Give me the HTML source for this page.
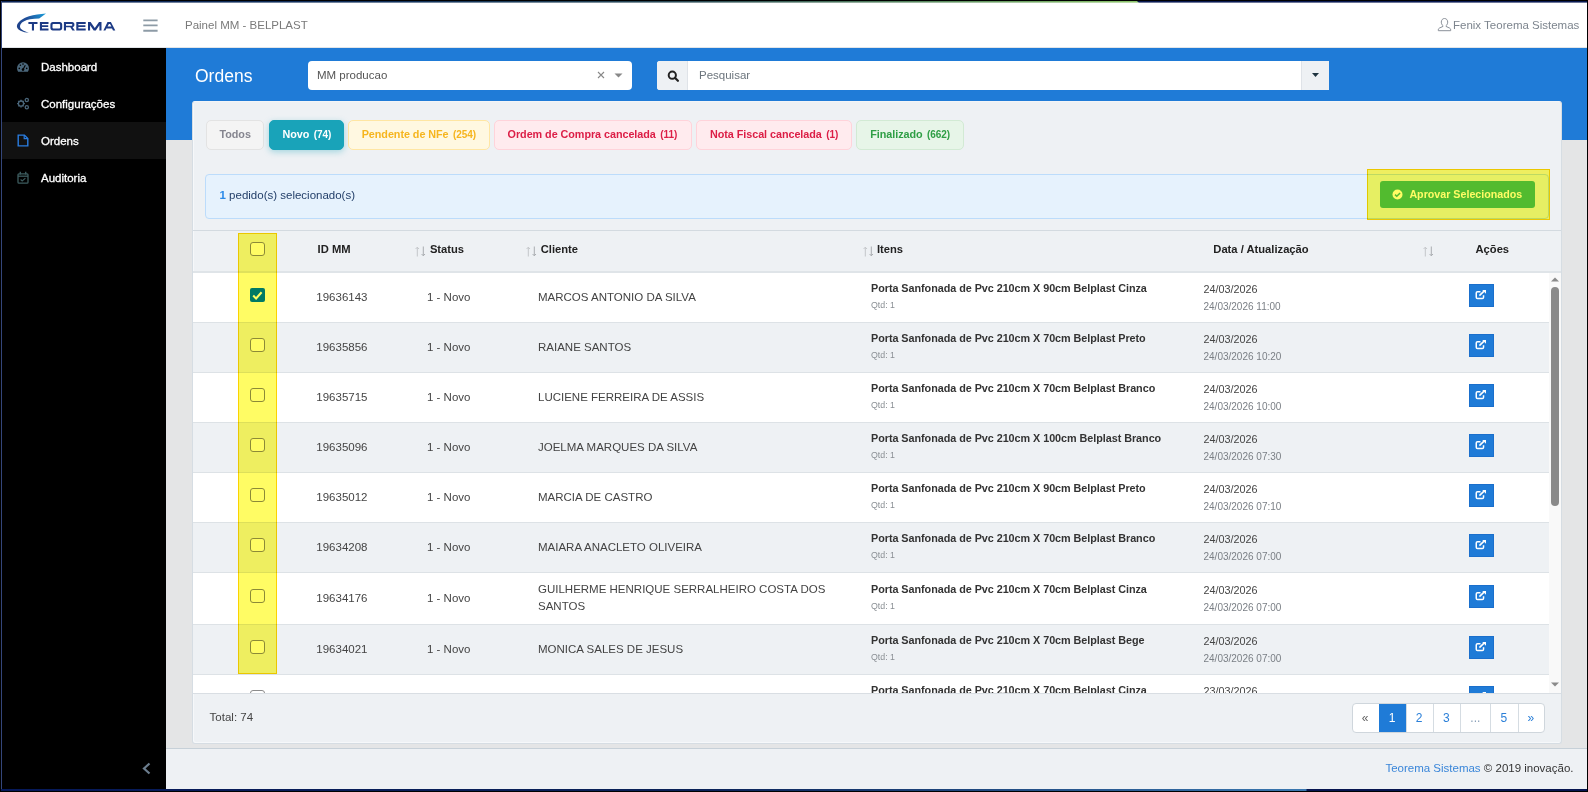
<!DOCTYPE html><html><head><meta charset="utf-8"><style>
*{box-sizing:border-box;margin:0;padding:0}
html,body{width:1588px;height:792px;overflow:hidden;background:#000}
body{position:relative;font-family:"Liberation Sans",sans-serif}
.a{position:absolute}
.t{position:absolute;white-space:nowrap}
</style></head><body><div class="a" style="left:1px;top:1px;width:1586px;height:1px;background:linear-gradient(to right,#0c2456 0,#10305a 400px,#2c4c55 700px,#5e9060 950px,#8cc46a 1136px,#0a1a52 1137px,#0a1a52 100%)"></div>
<div class="a" style="left:1px;top:1px;width:1px;height:789px;background:#34467a"></div>
<div class="a" style="left:1px;top:789px;width:1586px;height:2px;background:linear-gradient(to right,#06195a 0,#0a2258 700px,#3a78b0 1305px,#061550 1306px,#061550 100%)"></div>
<div class="a" style="left:2px;top:2px;width:1585px;height:46px;background:#fff;border-bottom:1px solid #e2e5e8"></div>
<div class="a" style="left:2px;top:2px;width:1585px;height:1px;background:linear-gradient(to right,#0c2456 0,#10305a 400px,#2c4c55 700px,#5e9060 950px,#8cc46a 1136px,#0a1a52 1137px,#0a1a52 100%);opacity:.6"></div>
<svg class="a" style="left:0;top:0" width="130" height="46" viewBox="0 0 130 46">
<defs><linearGradient id="sw" x1="16" y1="30" x2="46" y2="13" gradientUnits="userSpaceOnUse"><stop offset="0" stop-color="#1f3f86"/><stop offset=".45" stop-color="#1f4f9a"/><stop offset="1" stop-color="#1aa0dc"/></linearGradient>
<linearGradient id="tl" x1="17" y1="26" x2="29" y2="33" gradientUnits="userSpaceOnUse"><stop offset="0" stop-color="#1f3f86"/><stop offset="1" stop-color="#9aa6c0"/></linearGradient></defs>
<path d="M46 13.4C40 13.8 34 14.6 29 16.2 23.5 18 19 20.8 17.2 24.6 16.2 27 17.4 29.2 20.5 30.8 23 32 26 32.6 28.8 32.8 26 32 23.5 31 21.8 29.6 19.8 28 19.6 26 20.6 24.2 22 21.8 25.5 20.2 30 19.3 33 18.8 36 18.7 39.2 18.6Z" fill="url(#sw)"/>
<g fill="#1c3a85">
<path d="M28.4 22.1h9.1v1.8h-3.5v6.5h-2.1v-6.5h-3.5z"/>
<path d="M39.9 22.1h8.6v1.8h-6.5v1.4h6.2v1.6h-6.2v1.7h6.5v1.8h-8.6z"/>
<path fill-rule="evenodd" d="M52.8 22.1h7c1.4 0 2.4 1 2.4 2.4v3.5c0 1.4-1 2.4-2.4 2.4h-7c-1.4 0-2.4-1-2.4-2.4v-3.5c0-1.4 1-2.4 2.4-2.4zM53.3 23.9c-.5 0-.8.3-.8.8v3.1c0 .5.3.8.8.8h6c.5 0 .8-.3.8-.8v-3.1c0-.5-.3-.8-.8-.8z"/>
<path fill-rule="evenodd" d="M63.9 22.1h8.2c1.4 0 2.3.9 2.3 2.3v.7c0 1.2-.7 1.9-1.8 2.1l2.3 3.2h-2.5l-2.1-3.1h-4.3v3.1h-2.1zM66 23.9v1.8h5.6c.5 0 .7-.2.7-.6v-.6c0-.4-.2-.6-.7-.6z"/>
<path d="M76.3 22.1h9.4v1.8h-7.3v1.4h7v1.6h-7v1.7h7.3v1.8h-9.4z"/>
<path d="M88 30.4V22.1h2.6l4.2 5.9 4.2-5.9h2.5v8.3h-2.1v-5.1l-3.6 5.1h-2.1l-3.6-5.1v5.1z"/>
<path fill-rule="evenodd" d="M103.4 30.4l4.1-8.3h3.4l4.4 8.3h-2.3l-1-2h-5.6l-1 2zM107.6 26.6h3.8l-1.4-2.7h-1.1z"/>
</g></svg>
<svg class="a" style="left:140px;top:14px" width="22" height="22" viewBox="0 0 22 22"><path d="M3.3 6.4h14.3M3.3 11.4h14.3M3.3 16.7h14.3" stroke="#8d9ba6" stroke-width="1.9"/></svg>
<div class="t" style="left:185px;top:18.82px;font-size:11.5px;line-height:13px;font-weight:400;color:#7a7a7a;">Painel MM - BELPLAST</div>
<svg class="a" style="left:1437px;top:17px" width="15" height="15" viewBox="0 0 15 15"><path d="M7.5 1.5c2 0 3.2 1.6 3.2 3.6 0 1.6-.8 3-1.7 3.6v.7l3.8 1.8c.7.4.9.9.9 1.6v.9H1.3v-.9c0-.7.2-1.2.9-1.6L6 9.4v-.7C5.1 8.1 4.3 6.7 4.3 5.1c0-2 1.2-3.6 3.2-3.6z" fill="none" stroke="#8a9099" stroke-width="1"/></svg>
<div class="t" style="left:1453px;top:18.52px;font-size:11.5px;line-height:13px;font-weight:400;color:#7d858e;">Fenix Teorema Sistemas</div>
<div class="a" style="left:2px;top:48px;width:164px;height:741px;background:#000"></div>
<div class="a" style="left:2px;top:122px;width:164px;height:37px;background:#111"></div>
<div class="t" style="left:41px;top:60.92px;font-size:11.5px;line-height:13px;font-weight:400;color:#fff;-webkit-text-stroke:0.3px #fff;">Dashboard</div>
<div class="t" style="left:41px;top:97.92px;font-size:11.5px;line-height:13px;font-weight:400;color:#fff;-webkit-text-stroke:0.3px #fff;">Configurações</div>
<div class="t" style="left:41px;top:134.92px;font-size:11.5px;line-height:13px;font-weight:400;color:#fff;-webkit-text-stroke:0.3px #fff;">Ordens</div>
<div class="t" style="left:41px;top:171.92px;font-size:11.5px;line-height:13px;font-weight:400;color:#fff;-webkit-text-stroke:0.3px #fff;">Auditoria</div>
<svg class="a" style="left:16px;top:61px" width="14" height="12" viewBox="0 0 14 12"><path d="M7 1.2A6 6 0 0 0 1 7.2c0 1.3.4 2.5 1.1 3.5h9.8A6 6 0 0 0 13 7.2a6 6 0 0 0-6-6z" fill="#4a667a"/><circle cx="7" cy="8.6" r="1.3" fill="#000"/><path d="M7 8.6 9.3 4.2" stroke="#000" stroke-width="1.1"/><circle cx="3.3" cy="7.4" r=".8" fill="#000"/><circle cx="4.4" cy="4.3" r=".8" fill="#000"/><circle cx="7" cy="3.1" r=".8" fill="#000"/><circle cx="10.7" cy="7.4" r=".8" fill="#000"/></svg>
<svg class="a" style="left:16px;top:97px" width="14" height="13" viewBox="0 0 14 13"><g fill="none" stroke="#4a667a" stroke-width="1.3"><circle cx="5" cy="6.6" r="2.6"/><circle cx="10.8" cy="3" r="1.6"/><circle cx="10.8" cy="10.2" r="1.6"/></g><g stroke="#4a667a" stroke-width="1.4"><path d="M5 2.7v1.2M5 9.3v1.2M1.1 6.6h1.2M7.7 6.6h1.2M2.3 3.9l.9.9M6.8 8.4l.9.9M2.3 9.3l.9-.9M6.8 4.8l.9-.9"/></g></svg>
<svg class="a" style="left:17px;top:134px" width="12" height="13" viewBox="0 0 12 13"><path d="M1.2 1.1h6.2l3.4 3.4v7.4H1.2z" fill="none" stroke="#2a7de0" stroke-width="1.4"/><path d="M7.2 1.1v3.6h3.6" fill="none" stroke="#2a7de0" stroke-width="1.2"/></svg>
<svg class="a" style="left:17px;top:171px" width="12" height="13" viewBox="0 0 12 13"><rect x="1" y="2.8" width="10" height="9.4" rx="1" fill="none" stroke="#3d5c5f" stroke-width="1.3"/><path d="M1 5.2h10" stroke="#3d5c5f" stroke-width="1.3"/><path d="M3.3 .8v2.6M8.7 .8v2.6" stroke="#3d5c5f" stroke-width="1.4"/><path d="M3.6 8.5l1.6 1.5 3.2-2.8" fill="none" stroke="#3d5c5f" stroke-width="1.1"/></svg>
<svg class="a" style="left:141px;top:762px" width="11" height="13" viewBox="0 0 11 13"><path d="M8.5 1.5 3 6.5l5.5 5" fill="none" stroke="#6b7d8e" stroke-width="2.2"/></svg>
<div class="a" style="left:166px;top:48px;width:1421px;height:741px;background:#e4e5e6"></div>
<div class="a" style="left:166px;top:48px;width:1421px;height:92px;background:#1f7bd7"></div>
<div class="t" style="left:195px;top:65.94px;font-size:17.5px;line-height:20px;font-weight:400;color:#fff;">Ordens</div>
<div class="a" style="left:308px;top:61px;width:324px;height:29px;background:#fff;border-radius:4px"></div>
<div class="t" style="left:317px;top:68.82px;font-size:11.5px;line-height:13px;font-weight:400;color:#555;">MM producao</div>
<svg class="a" style="left:597px;top:71px" width="8" height="8" viewBox="0 0 8 8"><path d="M1 1l6 6M7 1 1 7" stroke="#888" stroke-width="1.1"/></svg>
<svg class="a" style="left:614px;top:73px" width="9" height="5" viewBox="0 0 9 5"><path d="M0.5 0.5h8L4.5 4.6z" fill="#888"/></svg>
<div class="a" style="left:657px;top:61px;width:672px;height:29px;background:#fff;border-radius:3px 0 0 3px;overflow:hidden"><div class="a" style="left:0;top:0;width:31px;height:29px;background:#eef1f4;border-right:1px solid #dfe3e8"></div><div class="a" style="left:644px;top:0;width:28px;height:29px;background:#eef1f4;border-left:1px solid #dfe3e8"></div></div>
<svg class="a" style="left:667px;top:70px" width="13" height="12" viewBox="0 0 13 12"><circle cx="5.3" cy="5.2" r="3.6" fill="none" stroke="#222" stroke-width="2"/><path d="M7.9 7.8l3 3" stroke="#222" stroke-width="2.2" stroke-linecap="round"/></svg>
<div class="t" style="left:699px;top:68.82px;font-size:11.5px;line-height:13px;font-weight:400;color:#6c757d;">Pesquisar</div>
<svg class="a" style="left:1312px;top:73px" width="7" height="4" viewBox="0 0 7 4"><path d="M0 0h7L3.5 4z" fill="#1f3440"/></svg>
<div class="a" style="left:192px;top:101px;width:1370px;height:643px;background:#eef1f4;border-radius:3px;border:1px solid #d6dde3;border-top-color:#f3f5f7;box-shadow:inset 1px -1px 0 #f6f8fa"></div>
<div class="a" style="left:205.5px;top:119.5px;width:58px;height:30.5px;background:#f4f4f4;border:1px solid #e3e3e3;border-radius:5px;"></div>
<div class="t" style="left:219.5px;top:128.26px;font-size:10.8px;line-height:12px;font-weight:700;color:#85858f;letter-spacing:-0.05px;">Todos</div>
<div class="a" style="left:268.5px;top:119.5px;width:75px;height:30.5px;background:#19a3b9;border:1px solid #19a3b9;border-radius:5px;box-shadow:0 2px 6px rgba(25,163,185,.35);"></div>
<div class="t" style="left:282.5px;top:128.26px;font-size:10.8px;line-height:12px;font-weight:700;color:#fff;letter-spacing:-0.05px;">Novo <span style="font-size:10px;margin-left:1.5px">(74)</span></div>
<div class="a" style="left:347.7px;top:119.5px;width:142px;height:30.5px;background:#fff8e1;border:1px solid #ffe6a3;border-radius:5px;"></div>
<div class="t" style="left:361.7px;top:128.26px;font-size:10.8px;line-height:12px;font-weight:700;color:#f6b51f;letter-spacing:-0.05px;">Pendente de NFe <span style="font-size:10px;margin-left:1.5px">(254)</span></div>
<div class="a" style="left:493.6px;top:119.5px;width:198px;height:30.5px;background:#ffebee;border:1px solid #ffd3da;border-radius:5px;"></div>
<div class="t" style="left:507.6px;top:128.26px;font-size:10.8px;line-height:12px;font-weight:700;color:#dc1e46;letter-spacing:-0.05px;">Ordem de Compra cancelada <span style="font-size:10px;margin-left:1.5px">(11)</span></div>
<div class="a" style="left:696px;top:119.5px;width:156px;height:30.5px;background:#ffebee;border:1px solid #ffd3da;border-radius:5px;"></div>
<div class="t" style="left:710px;top:128.26px;font-size:10.8px;line-height:12px;font-weight:700;color:#dc1e46;letter-spacing:-0.05px;">Nota Fiscal cancelada <span style="font-size:10px;margin-left:1.5px">(1)</span></div>
<div class="a" style="left:856.3px;top:119.5px;width:108px;height:30.5px;background:#e7f5e8;border:1px solid #d2ead4;border-radius:5px;"></div>
<div class="t" style="left:870.3px;top:128.26px;font-size:10.8px;line-height:12px;font-weight:700;color:#2f9e45;letter-spacing:-0.05px;">Finalizado <span style="font-size:10px;margin-left:1.5px">(662)</span></div>
<div class="a" style="left:205px;top:173.5px;width:1344px;height:45px;background:#e6f2fd;border:1px solid #bcdcfb;border-radius:4px"></div>
<div class="t" style="left:219.5px;top:189.12px;font-size:11.5px;line-height:13px;font-weight:400;color:#24406a;"><b style="color:#2b8ae8">1</b> pedido(s) selecionado(s)</div>
<div class="a" style="left:1380px;top:181px;width:155px;height:27px;background:#52bd78;border-radius:3px"></div>
<svg class="a" style="left:1392px;top:189px" width="11" height="11" viewBox="0 0 11 11"><circle cx="5.5" cy="5.5" r="5" fill="#fff"/><path d="M3 5.6l1.8 1.7 3.3-3.3" fill="none" stroke="#52bd78" stroke-width="1.5"/></svg>
<div class="t" style="left:1409.4px;top:187.89px;font-size:10.7px;line-height:12px;font-weight:700;color:#fff;">Aprovar Selecionados</div>
<div class="a" style="left:193px;top:230px;width:1368px;height:1px;background:#d3dae0"></div>
<div class="a" style="left:193px;top:271px;width:1368px;height:2px;background:#dfe4e8"></div>
<div class="t" style="left:317.6px;top:243.22px;font-size:11.2px;line-height:13px;font-weight:700;color:#222;">ID MM</div>
<svg class="a" style="left:414.5px;top:246px" width="12" height="11" viewBox="0 0 12 11"><path d="M2.3 10.5V1.2M.6 3 2.3 1.2 4 3" fill="none" stroke="#c4c7ca" stroke-width="1"/><path d="M8.3 .5v9.3M6.6 8 8.3 9.8 10 8" fill="none" stroke="#a9adb1" stroke-width="1"/></svg>
<div class="t" style="left:429.9px;top:243.22px;font-size:11.2px;line-height:13px;font-weight:700;color:#222;">Status</div>
<svg class="a" style="left:526px;top:246px" width="12" height="11" viewBox="0 0 12 11"><path d="M2.3 10.5V1.2M.6 3 2.3 1.2 4 3" fill="none" stroke="#c4c7ca" stroke-width="1"/><path d="M8.3 .5v9.3M6.6 8 8.3 9.8 10 8" fill="none" stroke="#a9adb1" stroke-width="1"/></svg>
<div class="t" style="left:540.7px;top:243.22px;font-size:11.2px;line-height:13px;font-weight:700;color:#222;">Cliente</div>
<svg class="a" style="left:862.5px;top:246px" width="12" height="11" viewBox="0 0 12 11"><path d="M2.3 10.5V1.2M.6 3 2.3 1.2 4 3" fill="none" stroke="#c4c7ca" stroke-width="1"/><path d="M8.3 .5v9.3M6.6 8 8.3 9.8 10 8" fill="none" stroke="#a9adb1" stroke-width="1"/></svg>
<div class="t" style="left:876.9px;top:243.22px;font-size:11.2px;line-height:13px;font-weight:700;color:#222;">Itens</div>
<div class="t" style="left:1213.3px;top:243.22px;font-size:11.2px;line-height:13px;font-weight:700;color:#222;">Data / Atualização</div>
<svg class="a" style="left:1422.5px;top:246px" width="12" height="11" viewBox="0 0 12 11"><path d="M2.3 10.5V1.2M.6 3 2.3 1.2 4 3" fill="none" stroke="#c4c7ca" stroke-width="1"/><path d="M8.3 .5v9.3M6.6 8 8.3 9.8 10 8" fill="none" stroke="#a9adb1" stroke-width="1"/></svg>
<div class="t" style="left:1475.5px;top:243.22px;font-size:11.2px;line-height:13px;font-weight:700;color:#222;">Ações</div>
<div class="a" style="left:250px;top:241.5px;width:14.5px;height:14.5px;background:#fff;border:1.3px solid #8c8c8c;border-radius:3px"></div>
<div class="a" style="left:193px;top:273px;width:1356px;height:420px;overflow:hidden"><div class="a" style="left:0;top:0px;width:1356px;height:50px;background:#fff;border-bottom:1px solid #dde2e6"></div><div class="a" style="left:57px;top:14.5px;width:14.8px;height:14.5px;background:#007bff;border-radius:2px"></div><svg class="a" style="left:57px;top:14.5px" width="15" height="15" viewBox="0 0 15 15"><path d="M3.2 7.6l2.9 2.9 5.5-6.2" fill="none" stroke="#fff" stroke-width="2.1"/></svg><div class="t" style="left:123.30000000000001px;top:17.52px;font-size:11.5px;line-height:13px;font-weight:400;color:#444;">19636143</div><div class="t" style="left:234px;top:17.52px;font-size:11.5px;line-height:13px;font-weight:400;color:#444;">1 - Novo</div><div class="t" style="left:345px;top:17.52px;font-size:11.5px;line-height:13px;font-weight:400;color:#444;">MARCOS ANTONIO DA SILVA</div><div class="t" style="left:678px;top:9.36px;font-size:10.8px;line-height:12px;font-weight:700;color:#333;letter-spacing:-0.04px;">Porta Sanfonada de Pvc 210cm X 90cm Belplast Cinza</div><div class="t" style="left:678px;top:26.75px;font-size:8.8px;line-height:10px;font-weight:400;color:#8a8f94;">Qtd: 1</div><div class="t" style="left:1010.5px;top:9.76px;font-size:10.8px;line-height:12px;font-weight:400;color:#444;">24/03/2026</div><div class="t" style="left:1010.5px;top:27.73px;font-size:10px;line-height:12px;font-weight:400;color:#7a7f85;">24/03/2026 11:00</div><div class="a" style="left:1276px;top:11px;width:24.5px;height:23px;background:#1f7bd7;border:1px solid #1a6fcc"></div><svg class="a" style="left:1281px;top:14.800000000000011px" width="14" height="13" viewBox="0 0 14 13"><path d="M6.5 3.65H3.5c-.8 0-1.25.45-1.25 1.25v4.3c0 .8.45 1.25 1.25 1.25h4.8c.8 0 1.25-.45 1.25-1.25V7.2" fill="none" stroke="#fff" stroke-width="1.5"/><path d="M5.4 7.6 10.3 2.9" stroke="#fff" stroke-width="1.6"/><path d="M8.2 2h3.8v3.8z" fill="#fff"/></svg><div class="a" style="left:0;top:50px;width:1356px;height:50px;background:#eef1f4;border-bottom:1px solid #dde2e6"></div><div class="a" style="left:57.3px;top:64.5px;width:14.5px;height:14.5px;background:#fff;border:1.3px solid #8c8c8c;border-radius:3px"></div><div class="t" style="left:123.30000000000001px;top:67.52px;font-size:11.5px;line-height:13px;font-weight:400;color:#444;">19635856</div><div class="t" style="left:234px;top:67.52px;font-size:11.5px;line-height:13px;font-weight:400;color:#444;">1 - Novo</div><div class="t" style="left:345px;top:67.52px;font-size:11.5px;line-height:13px;font-weight:400;color:#444;">RAIANE SANTOS</div><div class="t" style="left:678px;top:59.36px;font-size:10.8px;line-height:12px;font-weight:700;color:#333;letter-spacing:-0.04px;">Porta Sanfonada de Pvc 210cm X 70cm Belplast Preto</div><div class="t" style="left:678px;top:76.75px;font-size:8.8px;line-height:10px;font-weight:400;color:#8a8f94;">Qtd: 1</div><div class="t" style="left:1010.5px;top:59.76px;font-size:10.8px;line-height:12px;font-weight:400;color:#444;">24/03/2026</div><div class="t" style="left:1010.5px;top:77.73px;font-size:10px;line-height:12px;font-weight:400;color:#7a7f85;">24/03/2026 10:20</div><div class="a" style="left:1276px;top:61px;width:24.5px;height:23px;background:#1f7bd7;border:1px solid #1a6fcc"></div><svg class="a" style="left:1281px;top:64.80000000000001px" width="14" height="13" viewBox="0 0 14 13"><path d="M6.5 3.65H3.5c-.8 0-1.25.45-1.25 1.25v4.3c0 .8.45 1.25 1.25 1.25h4.8c.8 0 1.25-.45 1.25-1.25V7.2" fill="none" stroke="#fff" stroke-width="1.5"/><path d="M5.4 7.6 10.3 2.9" stroke="#fff" stroke-width="1.6"/><path d="M8.2 2h3.8v3.8z" fill="#fff"/></svg><div class="a" style="left:0;top:100px;width:1356px;height:50px;background:#fff;border-bottom:1px solid #dde2e6"></div><div class="a" style="left:57.3px;top:114.5px;width:14.5px;height:14.5px;background:#fff;border:1.3px solid #8c8c8c;border-radius:3px"></div><div class="t" style="left:123.30000000000001px;top:117.52px;font-size:11.5px;line-height:13px;font-weight:400;color:#444;">19635715</div><div class="t" style="left:234px;top:117.52px;font-size:11.5px;line-height:13px;font-weight:400;color:#444;">1 - Novo</div><div class="t" style="left:345px;top:117.52px;font-size:11.5px;line-height:13px;font-weight:400;color:#444;">LUCIENE FERREIRA DE ASSIS</div><div class="t" style="left:678px;top:109.36px;font-size:10.8px;line-height:12px;font-weight:700;color:#333;letter-spacing:-0.04px;">Porta Sanfonada de Pvc 210cm X 70cm Belplast Branco</div><div class="t" style="left:678px;top:126.75px;font-size:8.8px;line-height:10px;font-weight:400;color:#8a8f94;">Qtd: 1</div><div class="t" style="left:1010.5px;top:109.76px;font-size:10.8px;line-height:12px;font-weight:400;color:#444;">24/03/2026</div><div class="t" style="left:1010.5px;top:127.73px;font-size:10px;line-height:12px;font-weight:400;color:#7a7f85;">24/03/2026 10:00</div><div class="a" style="left:1276px;top:111px;width:24.5px;height:23px;background:#1f7bd7;border:1px solid #1a6fcc"></div><svg class="a" style="left:1281px;top:114.80000000000001px" width="14" height="13" viewBox="0 0 14 13"><path d="M6.5 3.65H3.5c-.8 0-1.25.45-1.25 1.25v4.3c0 .8.45 1.25 1.25 1.25h4.8c.8 0 1.25-.45 1.25-1.25V7.2" fill="none" stroke="#fff" stroke-width="1.5"/><path d="M5.4 7.6 10.3 2.9" stroke="#fff" stroke-width="1.6"/><path d="M8.2 2h3.8v3.8z" fill="#fff"/></svg><div class="a" style="left:0;top:150px;width:1356px;height:50px;background:#eef1f4;border-bottom:1px solid #dde2e6"></div><div class="a" style="left:57.3px;top:164.5px;width:14.5px;height:14.5px;background:#fff;border:1.3px solid #8c8c8c;border-radius:3px"></div><div class="t" style="left:123.30000000000001px;top:167.52px;font-size:11.5px;line-height:13px;font-weight:400;color:#444;">19635096</div><div class="t" style="left:234px;top:167.52px;font-size:11.5px;line-height:13px;font-weight:400;color:#444;">1 - Novo</div><div class="t" style="left:345px;top:167.52px;font-size:11.5px;line-height:13px;font-weight:400;color:#444;">JOELMA MARQUES DA SILVA</div><div class="t" style="left:678px;top:159.36px;font-size:10.8px;line-height:12px;font-weight:700;color:#333;letter-spacing:-0.04px;">Porta Sanfonada de Pvc 210cm X 100cm Belplast Branco</div><div class="t" style="left:678px;top:176.75px;font-size:8.8px;line-height:10px;font-weight:400;color:#8a8f94;">Qtd: 1</div><div class="t" style="left:1010.5px;top:159.76px;font-size:10.8px;line-height:12px;font-weight:400;color:#444;">24/03/2026</div><div class="t" style="left:1010.5px;top:177.73px;font-size:10px;line-height:12px;font-weight:400;color:#7a7f85;">24/03/2026 07:30</div><div class="a" style="left:1276px;top:161px;width:24.5px;height:23px;background:#1f7bd7;border:1px solid #1a6fcc"></div><svg class="a" style="left:1281px;top:164.8px" width="14" height="13" viewBox="0 0 14 13"><path d="M6.5 3.65H3.5c-.8 0-1.25.45-1.25 1.25v4.3c0 .8.45 1.25 1.25 1.25h4.8c.8 0 1.25-.45 1.25-1.25V7.2" fill="none" stroke="#fff" stroke-width="1.5"/><path d="M5.4 7.6 10.3 2.9" stroke="#fff" stroke-width="1.6"/><path d="M8.2 2h3.8v3.8z" fill="#fff"/></svg><div class="a" style="left:0;top:200px;width:1356px;height:50px;background:#fff;border-bottom:1px solid #dde2e6"></div><div class="a" style="left:57.3px;top:214.5px;width:14.5px;height:14.5px;background:#fff;border:1.3px solid #8c8c8c;border-radius:3px"></div><div class="t" style="left:123.30000000000001px;top:217.52px;font-size:11.5px;line-height:13px;font-weight:400;color:#444;">19635012</div><div class="t" style="left:234px;top:217.52px;font-size:11.5px;line-height:13px;font-weight:400;color:#444;">1 - Novo</div><div class="t" style="left:345px;top:217.52px;font-size:11.5px;line-height:13px;font-weight:400;color:#444;">MARCIA DE CASTRO</div><div class="t" style="left:678px;top:209.36px;font-size:10.8px;line-height:12px;font-weight:700;color:#333;letter-spacing:-0.04px;">Porta Sanfonada de Pvc 210cm X 90cm Belplast Preto</div><div class="t" style="left:678px;top:226.75px;font-size:8.8px;line-height:10px;font-weight:400;color:#8a8f94;">Qtd: 1</div><div class="t" style="left:1010.5px;top:209.76px;font-size:10.8px;line-height:12px;font-weight:400;color:#444;">24/03/2026</div><div class="t" style="left:1010.5px;top:227.73px;font-size:10px;line-height:12px;font-weight:400;color:#7a7f85;">24/03/2026 07:10</div><div class="a" style="left:1276px;top:211px;width:24.5px;height:23px;background:#1f7bd7;border:1px solid #1a6fcc"></div><svg class="a" style="left:1281px;top:214.8px" width="14" height="13" viewBox="0 0 14 13"><path d="M6.5 3.65H3.5c-.8 0-1.25.45-1.25 1.25v4.3c0 .8.45 1.25 1.25 1.25h4.8c.8 0 1.25-.45 1.25-1.25V7.2" fill="none" stroke="#fff" stroke-width="1.5"/><path d="M5.4 7.6 10.3 2.9" stroke="#fff" stroke-width="1.6"/><path d="M8.2 2h3.8v3.8z" fill="#fff"/></svg><div class="a" style="left:0;top:250px;width:1356px;height:50px;background:#eef1f4;border-bottom:1px solid #dde2e6"></div><div class="a" style="left:57.3px;top:264.5px;width:14.5px;height:14.5px;background:#fff;border:1.3px solid #8c8c8c;border-radius:3px"></div><div class="t" style="left:123.30000000000001px;top:267.52px;font-size:11.5px;line-height:13px;font-weight:400;color:#444;">19634208</div><div class="t" style="left:234px;top:267.52px;font-size:11.5px;line-height:13px;font-weight:400;color:#444;">1 - Novo</div><div class="t" style="left:345px;top:267.52px;font-size:11.5px;line-height:13px;font-weight:400;color:#444;">MAIARA ANACLETO OLIVEIRA</div><div class="t" style="left:678px;top:259.36px;font-size:10.8px;line-height:12px;font-weight:700;color:#333;letter-spacing:-0.04px;">Porta Sanfonada de Pvc 210cm X 70cm Belplast Branco</div><div class="t" style="left:678px;top:276.75px;font-size:8.8px;line-height:10px;font-weight:400;color:#8a8f94;">Qtd: 1</div><div class="t" style="left:1010.5px;top:259.76px;font-size:10.8px;line-height:12px;font-weight:400;color:#444;">24/03/2026</div><div class="t" style="left:1010.5px;top:277.74px;font-size:10px;line-height:12px;font-weight:400;color:#7a7f85;">24/03/2026 07:00</div><div class="a" style="left:1276px;top:261px;width:24.5px;height:23px;background:#1f7bd7;border:1px solid #1a6fcc"></div><svg class="a" style="left:1281px;top:264.79999999999995px" width="14" height="13" viewBox="0 0 14 13"><path d="M6.5 3.65H3.5c-.8 0-1.25.45-1.25 1.25v4.3c0 .8.45 1.25 1.25 1.25h4.8c.8 0 1.25-.45 1.25-1.25V7.2" fill="none" stroke="#fff" stroke-width="1.5"/><path d="M5.4 7.6 10.3 2.9" stroke="#fff" stroke-width="1.6"/><path d="M8.2 2h3.8v3.8z" fill="#fff"/></svg><div class="a" style="left:0;top:300px;width:1356px;height:52px;background:#fff;border-bottom:1px solid #dde2e6"></div><div class="a" style="left:57.3px;top:315.5px;width:14.5px;height:14.5px;background:#fff;border:1.3px solid #8c8c8c;border-radius:3px"></div><div class="t" style="left:123.30000000000001px;top:318.52px;font-size:11.5px;line-height:13px;font-weight:400;color:#444;">19634176</div><div class="t" style="left:234px;top:318.52px;font-size:11.5px;line-height:13px;font-weight:400;color:#444;">1 - Novo</div><div class="t" style="left:345px;top:310.02px;font-size:11.5px;line-height:13px;font-weight:400;color:#444;">GUILHERME HENRIQUE SERRALHEIRO COSTA DOS</div><div class="t" style="left:345px;top:327.02px;font-size:11.5px;line-height:13px;font-weight:400;color:#444;">SANTOS</div><div class="t" style="left:678px;top:310.36px;font-size:10.8px;line-height:12px;font-weight:700;color:#333;letter-spacing:-0.04px;">Porta Sanfonada de Pvc 210cm X 70cm Belplast Cinza</div><div class="t" style="left:678px;top:327.75px;font-size:8.8px;line-height:10px;font-weight:400;color:#8a8f94;">Qtd: 1</div><div class="t" style="left:1010.5px;top:310.76px;font-size:10.8px;line-height:12px;font-weight:400;color:#444;">24/03/2026</div><div class="t" style="left:1010.5px;top:328.74px;font-size:10px;line-height:12px;font-weight:400;color:#7a7f85;">24/03/2026 07:00</div><div class="a" style="left:1276px;top:312px;width:24.5px;height:23px;background:#1f7bd7;border:1px solid #1a6fcc"></div><svg class="a" style="left:1281px;top:315.79999999999995px" width="14" height="13" viewBox="0 0 14 13"><path d="M6.5 3.65H3.5c-.8 0-1.25.45-1.25 1.25v4.3c0 .8.45 1.25 1.25 1.25h4.8c.8 0 1.25-.45 1.25-1.25V7.2" fill="none" stroke="#fff" stroke-width="1.5"/><path d="M5.4 7.6 10.3 2.9" stroke="#fff" stroke-width="1.6"/><path d="M8.2 2h3.8v3.8z" fill="#fff"/></svg><div class="a" style="left:0;top:352px;width:1356px;height:50px;background:#eef1f4;border-bottom:1px solid #dde2e6"></div><div class="a" style="left:57.3px;top:366.5px;width:14.5px;height:14.5px;background:#fff;border:1.3px solid #8c8c8c;border-radius:3px"></div><div class="t" style="left:123.30000000000001px;top:369.52px;font-size:11.5px;line-height:13px;font-weight:400;color:#444;">19634021</div><div class="t" style="left:234px;top:369.52px;font-size:11.5px;line-height:13px;font-weight:400;color:#444;">1 - Novo</div><div class="t" style="left:345px;top:369.52px;font-size:11.5px;line-height:13px;font-weight:400;color:#444;">MONICA SALES DE JESUS</div><div class="t" style="left:678px;top:361.36px;font-size:10.8px;line-height:12px;font-weight:700;color:#333;letter-spacing:-0.04px;">Porta Sanfonada de Pvc 210cm X 70cm Belplast Bege</div><div class="t" style="left:678px;top:378.75px;font-size:8.8px;line-height:10px;font-weight:400;color:#8a8f94;">Qtd: 1</div><div class="t" style="left:1010.5px;top:361.76px;font-size:10.8px;line-height:12px;font-weight:400;color:#444;">24/03/2026</div><div class="t" style="left:1010.5px;top:379.74px;font-size:10px;line-height:12px;font-weight:400;color:#7a7f85;">24/03/2026 07:00</div><div class="a" style="left:1276px;top:363px;width:24.5px;height:23px;background:#1f7bd7;border:1px solid #1a6fcc"></div><svg class="a" style="left:1281px;top:366.79999999999995px" width="14" height="13" viewBox="0 0 14 13"><path d="M6.5 3.65H3.5c-.8 0-1.25.45-1.25 1.25v4.3c0 .8.45 1.25 1.25 1.25h4.8c.8 0 1.25-.45 1.25-1.25V7.2" fill="none" stroke="#fff" stroke-width="1.5"/><path d="M5.4 7.6 10.3 2.9" stroke="#fff" stroke-width="1.6"/><path d="M8.2 2h3.8v3.8z" fill="#fff"/></svg><div class="a" style="left:0;top:402px;width:1356px;height:50px;background:#fff;border-bottom:1px solid #dde2e6"></div><div class="a" style="left:57.3px;top:416.5px;width:14.5px;height:14.5px;background:#fff;border:1.3px solid #8c8c8c;border-radius:3px"></div><div class="t" style="left:678px;top:411.36px;font-size:10.8px;line-height:12px;font-weight:700;color:#333;letter-spacing:-0.04px;">Porta Sanfonada de Pvc 210cm X 70cm Belplast Cinza</div><div class="t" style="left:1010.5px;top:411.76px;font-size:10.8px;line-height:12px;font-weight:400;color:#444;">23/03/2026</div><div class="a" style="left:1276px;top:413px;width:24.5px;height:23px;background:#1f7bd7;border:1px solid #1a6fcc"></div><svg class="a" style="left:1281px;top:416.79999999999995px" width="14" height="13" viewBox="0 0 14 13"><path d="M6.5 3.65H3.5c-.8 0-1.25.45-1.25 1.25v4.3c0 .8.45 1.25 1.25 1.25h4.8c.8 0 1.25-.45 1.25-1.25V7.2" fill="none" stroke="#fff" stroke-width="1.5"/><path d="M5.4 7.6 10.3 2.9" stroke="#fff" stroke-width="1.6"/><path d="M8.2 2h3.8v3.8z" fill="#fff"/></svg></div>
<div class="a" style="left:1549px;top:273px;width:12px;height:420px;background:#f9f9f9"></div>
<svg class="a" style="left:1551px;top:277px" width="8" height="5" viewBox="0 0 8 5"><path d="M0 4.6h8L4 .6z" fill="#8a8a8a"/></svg>
<svg class="a" style="left:1551px;top:682px" width="8" height="5" viewBox="0 0 8 5"><path d="M0 .4h8L4 4.4z" fill="#8a8a8a"/></svg>
<div class="a" style="left:1551.2px;top:287px;width:7.5px;height:219px;background:#8a8a8a;border-radius:4px"></div>
<div class="a" style="left:193px;top:693px;width:1368px;height:1px;background:#d9dee3"></div>
<div class="t" style="left:209.6px;top:711.22px;font-size:11.5px;line-height:13px;font-weight:400;color:#444;">Total: 74</div>
<div class="a" style="left:1351.5px;top:703.3px;width:193px;height:29.5px;background:#fff;border:1px solid #cfd6dc;border-radius:4px"></div>
<div class="t" style="left:1351.5px;top:704px;width:27.299999999999955px;height:29.5px;line-height:29.5px;text-align:center;font-size:12px;color:#666">«</div>
<div class="a" style="left:1378.8px;top:704.3px;width:26.799999999999955px;height:27.5px;background:#1f7bd7"></div>
<div class="t" style="left:1378.8px;top:704px;width:26.799999999999955px;height:29.5px;line-height:29.5px;text-align:center;font-size:12px;color:#fff">1</div>
<div class="a" style="left:1405.6px;top:704px;width:1px;height:28px;background:#d5dce2"></div>
<div class="t" style="left:1405.6px;top:704px;width:27.0px;height:29.5px;line-height:29.5px;text-align:center;font-size:12px;color:#2a7fd8">2</div>
<div class="a" style="left:1432.6px;top:704px;width:1px;height:28px;background:#d5dce2"></div>
<div class="t" style="left:1432.6px;top:704px;width:27.700000000000045px;height:29.5px;line-height:29.5px;text-align:center;font-size:12px;color:#2a7fd8">3</div>
<div class="a" style="left:1460.3px;top:704px;width:1px;height:28px;background:#d5dce2"></div>
<div class="t" style="left:1460.3px;top:704px;width:30.100000000000136px;height:29.5px;line-height:29.5px;text-align:center;font-size:12px;color:#8aa0b8">...</div>
<div class="a" style="left:1490.4px;top:704px;width:1px;height:28px;background:#d5dce2"></div>
<div class="t" style="left:1490.4px;top:704px;width:27.09999999999991px;height:29.5px;line-height:29.5px;text-align:center;font-size:12px;color:#2a7fd8">5</div>
<div class="a" style="left:1517.5px;top:704px;width:1px;height:28px;background:#d5dce2"></div>
<div class="t" style="left:1517.5px;top:704px;width:26.700000000000045px;height:29.5px;line-height:29.5px;text-align:center;font-size:12px;color:#2a7fd8">»</div>
<div class="a" style="left:238px;top:232.5px;width:39px;height:441px;background:#fffc64;mix-blend-mode:multiply;border:1.5px solid #fbd300"></div>
<div class="a" style="left:1366.5px;top:169px;width:183px;height:50.5px;background:#fffc64;mix-blend-mode:multiply;border:1.5px solid #fbd300"></div>
<div class="a" style="left:166px;top:748px;width:1421px;height:41px;background:#eef1f4;border-top:1px solid #c6d0d8"></div>
<div class="t" style="left:1385.4px;top:762.42px;font-size:11.5px;line-height:13px;font-weight:400;color:#333;"><span style="color:#3a86d9">Teorema Sistemas</span> © 2019 inovação.</div></body></html>
